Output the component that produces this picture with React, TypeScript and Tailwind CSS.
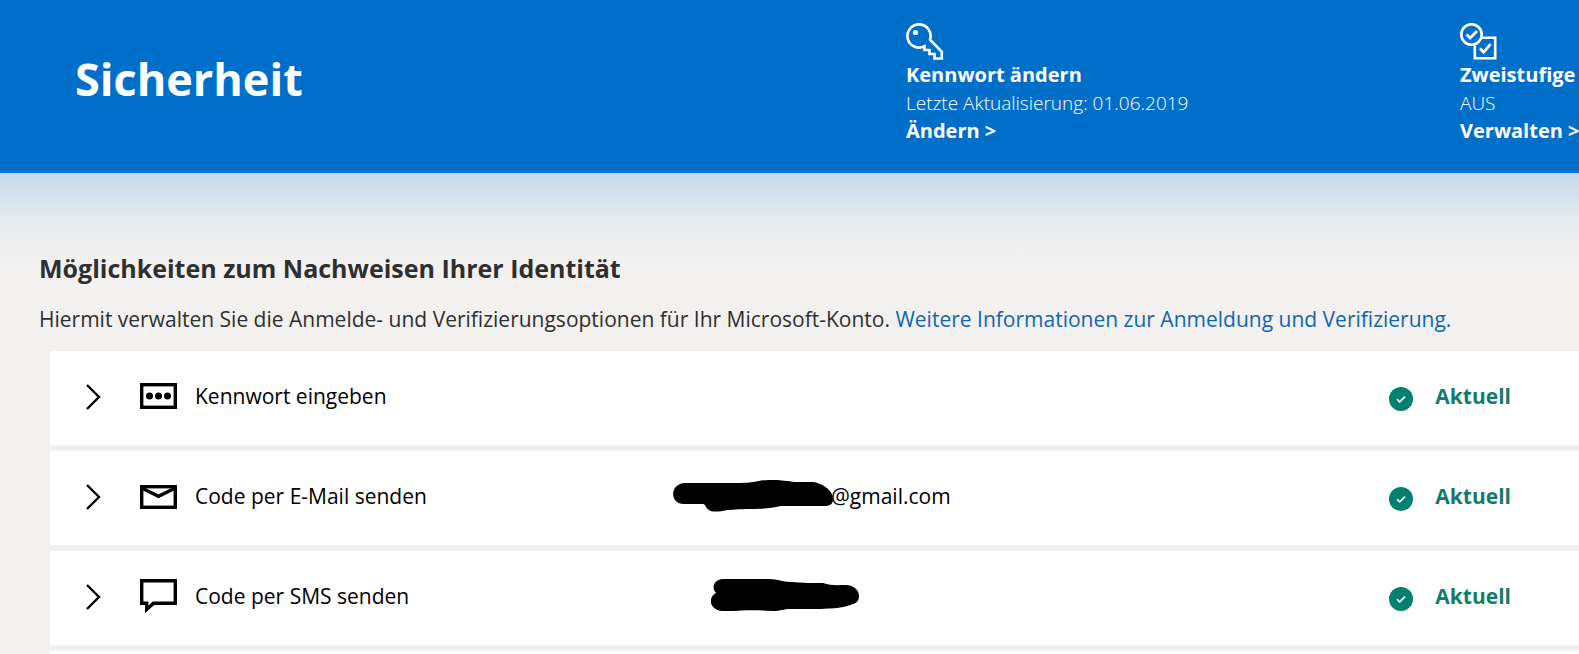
import type { ReactNode } from "react";

function KeyIcon() {
  return (
    <svg width="38" height="38" viewBox="0 0 38 38" fill="none" stroke="currentColor" strokeWidth="2.6" aria-hidden="true">
      <path d="M24 16.7A11.6 11.6 0 1 0 18.500 23.200V27H23.500V31H28.500V35.500H35.800V28.800Z" />
      <circle cx="9.500" cy="9.500" r="2.600" fill="currentColor" stroke="none" />
    </svg>
  );
}

function TwoStepIcon() {
  return (
    <svg width="38" height="38" viewBox="0 0 38 38" fill="none" stroke="currentColor" strokeWidth="2.6" aria-hidden="true">
      <circle cx="11.500" cy="11.500" r="10.200" />
      <path d="M22 14.800H35.200V35.200H14.800V22.500" />
      <path d="M6.500 11.500l3.600 3.600 7-7M20 25.500l3.600 3.600 7-8" strokeWidth="2.800" />
    </svg>
  );
}

function PasswordIcon() {
  return (
    <svg width="38" height="28" viewBox="0 0 38 28" aria-hidden="true">
      <rect x="1.700" y="1.700" width="33.600" height="22.600" fill="none" stroke="currentColor" strokeWidth="3.400" />
      <circle cx="9.500" cy="13" r="3.500" />
      <circle cx="18.500" cy="13" r="3.500" />
      <circle cx="27.500" cy="13" r="3.500" />
    </svg>
  );
}

function MailIcon() {
  return (
    <svg width="38" height="24" viewBox="0 0 38 24" fill="none" stroke="currentColor" strokeWidth="3.400" aria-hidden="true">
      <rect x="1.700" y="1.700" width="33.600" height="20.600" />
      <path d="M1.700 3L18.500 11.300L35.300 3" />
    </svg>
  );
}

function MessageIcon() {
  return (
    <svg width="38" height="36" viewBox="0 0 38 36" fill="none" stroke="currentColor" strokeWidth="3.400" aria-hidden="true">
      <path d="M1.700 1.700H35.300V24.300H13.500L6.700 30.500V24.300H1.700Z" />
    </svg>
  );
}

function Chevron() {
  return (
    <svg width="16" height="26" viewBox="0 0 16 26" fill="none" stroke="currentColor" strokeWidth="2.400" aria-hidden="true">
      <path d="M1 1L13 13L1 25" />
    </svg>
  );
}

function CheckBadge() {
  return (
    <svg className="mt-1" width="24" height="24" viewBox="0 0 24 24" fill="none" aria-hidden="true">
      <circle cx="12" cy="12" r="12" fill="#038070" />
      <path d="M8 12.200l2.700 2.700 5.300-5.300" stroke="white" strokeWidth="1.600" />
    </svg>
  );
}

function MailScribble() {
  return (
    <svg className="-mr-0.5" width="160" height="34" viewBox="0 0 160 34" aria-hidden="true">
      <path d="M11 3H68C82 3 84 0 98 0C112 0 118 2 124 2H138C148 2 160 10 160 19C160 24 157 26 152 26H108C98 28 92 29 78 29C64 29 60 30 54 30C46 32 38 32 36 30C32 28 33 24 30 24H11C-3 24 -4 5 11 3Z" />
    </svg>
  );
}

function PhoneScribble() {
  return (
    <svg width="148" height="36" viewBox="0 0 148 36" aria-hidden="true">
      <path d="M11 0H58C68 0 70 3 80 3C92 4 102 4 112 4C120 7 128 6 134 6C144 6 148 12 148 17C148 24 143 25 136 27C126 30 120 29 110 30H80C72 30 70 32 62 32C46 31 34 31 22 32H11C-1 31 -4 19 5 14C0 9 3 1 11 0Z" />
    </svg>
  );
}

const HEADER_ACTIONS = [
  { title: "Kennwort ändern", text: "Letzte Aktualisierung: 01.06.2019", link: "Ändern >", icon: <KeyIcon /> },
  { title: "Zweistufige", text: "AUS", link: "Verwalten >", icon: <TwoStepIcon /> },
];

const METHODS: { label: string; icon: ReactNode; detail?: ReactNode }[] = [
  { label: "Kennwort eingeben", icon: <PasswordIcon /> },
  {
    label: "Code per E-Mail senden",
    icon: <MailIcon />,
    detail: (
      <>
        <MailScribble />
        <span>@gmail.com</span>
      </>
    ),
  },
  {
    label: "Code per SMS senden",
    icon: <MessageIcon />,
    detail: (
      <span className="pl-[38px]">
        <PhoneScribble />
      </span>
    ),
  },
];

export default function App() {
  return (
    <div className="flex h-screen flex-col overflow-hidden bg-[#f2f1f0] font-['Open_Sans',sans-serif] text-[#2f2f2f]">
      <header className="flex shrink-0 items-start overflow-hidden bg-[#006fca] pt-[23px] pb-7 pl-[75px] text-white">
        <h1 className="flex-1 pt-6 text-[45px] leading-[64px] font-bold">Sicherheit</h1>
        {HEADER_ACTIONS.map((action) => (
          <section
            key={action.title}
            className="w-[554px] shrink-0 text-xl leading-7 whitespace-nowrap last:w-[119px]"
          >
            {action.icon}
            <h2 className="font-bold">{action.title}</h2>
            <p className="text-[19px] leading-7 font-light">{action.text}</p>
            <a href="#" className="font-bold">
              {action.link}
            </a>
          </section>
        ))}
      </header>

      <main className="flex-1 bg-linear-to-b from-[#c3d9ea] via-[#e5eaee] via-[44px] to-[#f2f1f0] to-[90px] pt-[75px] pl-[39px]">
        <h2 className="text-[25px] leading-10 font-bold">Möglichkeiten zum Nachweisen Ihrer Identität</h2>
        <p className="mt-[15px] text-[21px] leading-8 whitespace-nowrap">
          Hiermit verwalten Sie die Anmelde- und Verifizierungsoptionen für Ihr Microsoft-Konto.{" "}
          <a href="#" className="text-[#1067b0]">
            Weitere Informationen zur Anmeldung und Verifizierung.
          </a>
        </p>

        <ul className="mt-4 ml-[11px] flex flex-col gap-1.5 text-[21px] text-black">
          {METHODS.map((method) => (
            <li key={method.label}>
              <button type="button" className="flex h-[94px] w-full items-center bg-white pr-[68px] pb-0.5 pl-9 text-left">
                <span className="w-[54px]">
                  <Chevron />
                </span>
                <span className="w-[55px]">{method.icon}</span>
                <span className="w-[478px]">{method.label}</span>
                <span className="flex flex-1 items-center">{method.detail}</span>
                <span className="flex items-center gap-[22px] font-bold text-[#127c6b]">
                  <CheckBadge />
                  Aktuell
                </span>
              </button>
            </li>
          ))}
          <li className="h-[94px] bg-white" />
        </ul>
      </main>
    </div>
  );
}
